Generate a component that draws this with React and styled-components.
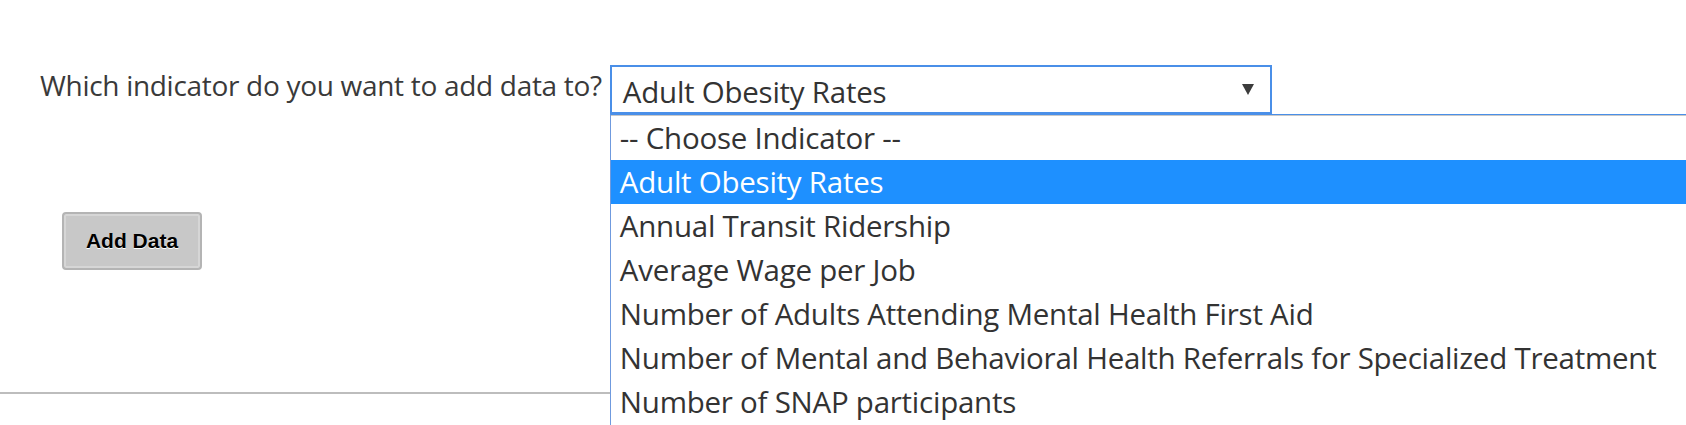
import React from "react";
import styled, { createGlobalStyle } from "styled-components";

const GlobalStyle = createGlobalStyle`
  html, body {
    margin: 0;
    padding: 0;
    height: 100%;
    overflow: hidden;
  }
  body {
    background: #fff;
    font-family: "Open Sans", "Noto Sans", sans-serif;
    color: #333;
  }
  #root {
    height: 100%;
  }
`;

const Page = styled.div`
  box-sizing: border-box;
  width: 100%;
  min-height: 100%;
  padding-top: 65px;
`;

const Field = styled.div`
  display: flex;
  align-items: flex-start;
  padding-left: 40px;
`;

const Label = styled.label`
  font-size: 28px;
  letter-spacing: -0.3px;
  line-height: 40px;
  margin-right: 8px;
  white-space: nowrap;
  color: #3a3a3a;
`;

const SelectWrap = styled.div`
  position: relative;
`;

const SelectBox = styled.div`
  box-sizing: border-box;
  display: flex;
  align-items: center;
  justify-content: space-between;
  width: 662px;
  height: 49px;
  padding: 3px 16px 0 11px;
  border: 2px solid #4a8fe8;
  font-size: 29.5px;
  letter-spacing: -0.25px;
  color: #333;
  background: #fff;
`;

const Arrow = styled.span`
  width: 0;
  height: 0;
  border-left: 6px solid transparent;
  border-right: 6px solid transparent;
  border-top: 11px solid #3c3c3c;
  margin-top: -3px;
`;

/* the open option list lies over the page, out to the window edges */
const List = styled.ul`
  position: absolute;
  top: 100%;
  left: 0;
  width: 1076px;
  height: 311px;
  margin: 0;
  padding: 1px 0 0;
  list-style: none;
  box-sizing: border-box;
  overflow: hidden;
  background: #fff;
  border-top: 1px solid #4a8fe8;
  border-left: 1px solid #6f9ade;
  box-shadow: 0 1px 0 #c8c8c8 inset;
  z-index: 2;
`;

const Option = styled.li`
  height: 44px;
  display: flex;
  align-items: center;
  padding: 0 0 2px 9px;
  box-sizing: border-box;
  font-size: 29.5px;
  letter-spacing: -0.25px;
  white-space: nowrap;
  color: ${p => (p.$selected ? "#fff" : "#333")};
  background: ${p => (p.$selected ? "#1e90ff" : "transparent")};
`;

const Actions = styled.div`
  padding: 98px 0 0 62px;
`;

const Button = styled.button`
  box-sizing: border-box;
  width: 140px;
  height: 58px;
  border: 2px solid #b4b4b4;
  border-radius: 4px;
  background: #c8c8c8;
  box-shadow: inset 0 0 0 2px #d6d6d6;
  font-family: "Liberation Sans", Arial, sans-serif;
  font-weight: bold;
  font-size: 21px;
  color: #000;
  text-shadow: 0 1px 0 #fff;
  cursor: pointer;
  padding: 0;
`;

const Rule = styled.hr`
  margin: 122px 0 0;
  border: 0;
  height: 2px;
  background: #bdbdbd;
`;

const indicators = [
  "-- Choose Indicator --",
  "Adult Obesity Rates",
  "Annual Transit Ridership",
  "Average Wage per Job",
  "Number of Adults Attending Mental Health First Aid",
  "Number of Mental and Behavioral Health Referrals for Specialized Treatment",
  "Number of SNAP participants",
];

export default function App() {
  const selected = "Adult Obesity Rates";

  return (
    <>
      <GlobalStyle />
      <Page>
        <Field>
          <Label>Which indicator do you want to add data to?</Label>
          <SelectWrap>
            <SelectBox>
              <span>{selected}</span>
              <Arrow />
            </SelectBox>
            <List>
              {indicators.map(item => (
                <Option key={item} $selected={item === selected}>
                  {item}
                </Option>
              ))}
            </List>
          </SelectWrap>
        </Field>
        <Actions>
          <Button>Add Data</Button>
        </Actions>
        <Rule />
      </Page>
    </>
  );
}
